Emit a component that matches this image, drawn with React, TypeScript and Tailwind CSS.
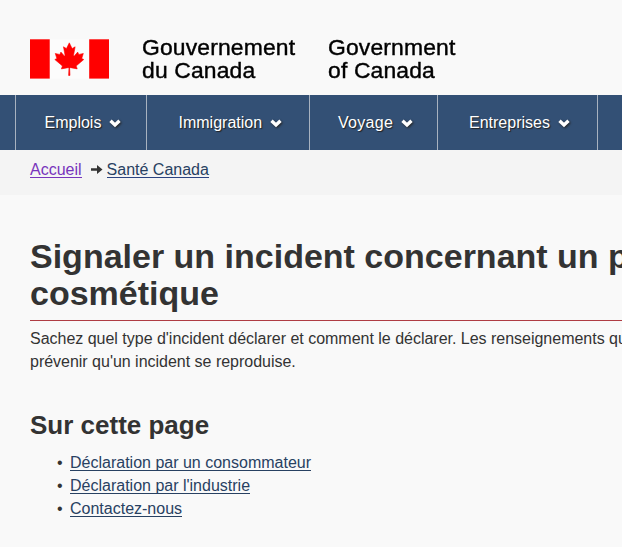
const menu = [
  { label: 'Emplois', box: 'w-[131px] pl-[28.5px]', text: 'w-[56.5px]' },
  { label: 'Immigration', box: 'w-[163px] pl-[31.5px]', text: 'w-[83.5px]' },
  { label: 'Voyage', box: 'w-[128px] pl-[28px]', text: 'w-[55px] tracking-[0.3px]' },
  { label: 'Entreprises', box: 'w-[160px] pl-[31px]', text: 'w-[81px]' },
];

const sections = ['Déclaration par un consommateur', "Déclaration par l'industrie", 'Contactez-nous'];

function Flag() {
  return (
    <svg className="mt-[39px] h-10 w-[79px] shrink-0" viewBox="0 0 79 40">
      <rect x="0" y="0.3" width="19.8" height="39.3" fill="#f00" />
      <rect x="19.8" y="0.3" width="39.4" height="39.3" fill="#fff" fillOpacity="0.5" />
      <rect x="59.2" y="0.3" width="19.8" height="39.3" fill="#f00" />
      <path
        transform="translate(39.3 20) scale(0.0078 0.0081)"
        fill="#f00"
        stroke="#f00"
        strokeWidth="70"
        d="m-90 2030 45-863a95 95 0 0 0-111-98l-859 151 116-320a65 65 0 0 0-20-73l-941-762 212-99a65 65 0 0 0 34-79l-186-572 542 115a65 65 0 0 0 73-38l105-247 423 454a65 65 0 0 0 111-57l-204-1052 327 189a65 65 0 0 0 91-27l332-652 332 652a65 65 0 0 0 91 27l327-189-204 1052a65 65 0 0 0 111 57l423-454 105 247a65 65 0 0 0 73 38l542-115-186 572a65 65 0 0 0 34 79l212 99-941 762a65 65 0 0 0-20 73l116 320-859-151a95 95 0 0 0-111 98l45 863z"
      />
    </svg>
  );
}

function Chevron() {
  return (
    <svg className="ml-2 mt-[2px] h-[9px] w-3 shrink-0 overflow-visible drop-shadow-[1px_1px_1px_#222]" viewBox="0 0 12 9">
      <path d="M1.5 1.8 6 6 10.5 1.8" fill="none" stroke="#fff" strokeWidth="3.4" />
    </svg>
  );
}

export default function App() {
  return (
    <div className="h-[547px] w-[622px] overflow-hidden bg-[#f9f9f9] font-['Liberation_Sans',Arial,sans-serif] text-base leading-[23px] text-[#333]">
      <header className="flex h-[95px] pl-[30px] text-[22px] leading-[23px] text-black [-webkit-text-stroke:0.4px_#000]">
        <Flag />
        <p className="ml-[33px] mt-[36px] w-[186px] origin-left scale-x-[1.04] whitespace-nowrap tracking-[0.15px]">
          Gouvernement
          <br />
          du Canada
        </p>
        <p className="mt-[36px] origin-left scale-x-[1.04] whitespace-nowrap tracking-[0.15px]">
          Government
          <br />
          of Canada
        </p>
      </header>
      <nav className="flex h-[55px] bg-[#335075] pl-[15px]">
        {menu.map((item) => (
          <div key={item.label} className={`flex shrink-0 items-center border-l border-[#a8b2c0] text-white ${item.box}`}>
            <span className={`whitespace-nowrap [text-shadow:1px_1px_1px_#222] ${item.text}`}>{item.label}</span>
            <Chevron />
          </div>
        ))}
        <div className="w-6 shrink-0 border-l border-[#a8b2c0]" />
      </nav>
      <div className="flex h-[45px] bg-[#f4f4f4] pl-[30px] pt-2">
        <a className="h-[20px] border-b border-[#7834bc] text-[#7834bc]">Accueil</a>
        <svg className="ml-[9px] mt-[7px] h-[9px] w-3" viewBox="0 0 12 9">
          <path d="M0 3.2H6V0L11.5 4.5 6 9V5.8H0Z" fill="#333" />
        </svg>
        <a className="ml-1 h-[20px] border-b border-[#2b4380] text-[#284162]">Santé Canada</a>
      </div>
      <main className="pl-[30px] pt-[43px]">
        <h1 className="h-[83px] whitespace-nowrap border-b border-[#af3c43] text-[34px] font-bold leading-[37px]">
          Signaler un incident concernant un produit
          <br />
          cosmétique
        </h1>
        <p className="mt-[6px] whitespace-nowrap tracking-[-0.015px]">
          Sachez quel type d'incident déclarer et comment le déclarer. Les renseignements que
          <br />
          prévenir qu'un incident se reproduise.
        </p>
        <h2 className="mt-[38px] text-[26px] font-bold leading-[29px]">Sur cette page</h2>
        <ul className="mt-[11px]">
          {sections.map((label) => (
            <li key={label} className="flex h-[23px]">
              <span className="w-10 pl-[27px]">•</span>
              <a className="h-[20px] whitespace-nowrap border-b border-[#284162] text-[#284162]">{label}</a>
            </li>
          ))}
        </ul>
      </main>
    </div>
  );
}
